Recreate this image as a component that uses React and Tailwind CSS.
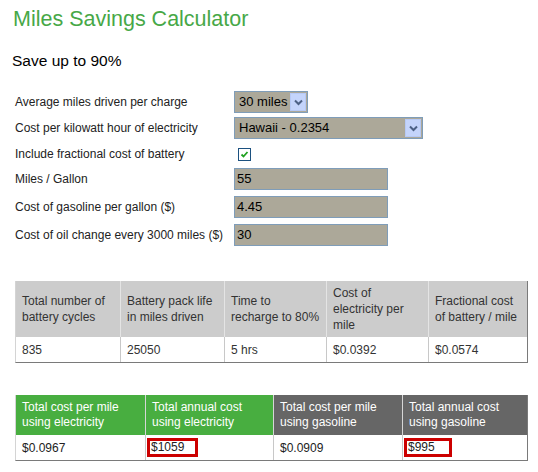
import React from "react";

const font = { fontFamily: '"Liberation Sans", Arial, sans-serif' };

const Arrow = () => (
    <span className="flex h-full w-[16px] items-center justify-center border border-[#b6c9f5] bg-[#c4d4fb]">
        <svg width="9" height="7" viewBox="0 0 9 7">
            <path d="M1 1.5 L4.5 5 L8 1.5" fill="none" stroke="#4d6185" strokeWidth="2" />
        </svg>
    </span>
);

const Select = ({ value, width }) => (
    <div className={`flex h-[22px] ${width} items-stretch border border-[#7f9db9] bg-[#aca899] p-px`}>
        <span className="flex-1 pl-[3px] text-[13px] leading-[18px] text-black">{value}</span>
        <Arrow />
    </div>
);

const TextInput = ({ value }) => (
    <div className="h-[22px] w-[154px] border border-[#7f9db9] bg-[#aca899] pl-[2px] text-[13px] leading-[20px] text-black">
        {value}
    </div>
);

const Checkbox = () => (
    <div className="ml-[4px] flex h-[13px] w-[13px] items-center justify-center border border-[#1c5180] bg-white">
        <svg width="9" height="9" viewBox="0 0 9 9">
            <path d="M1.5 4.5 L3.5 6.5 L7.5 2" fill="none" stroke="#21a121" strokeWidth="1.8" />
        </svg>
    </div>
);

const FormRow = ({ label, className, children }) => (
    <div className={`flex h-[22px] items-center ${className}`}>
        <span className="w-[219px] text-[12px] text-[#222]">{label}</span>
        {children}
    </div>
);

const App = () => {

    // header lines are broken where the original table breaks them
    const batteryHeadings = [
        ["Total number of", "battery cycles"],
        ["Battery pack life", "in miles driven"],
        ["Time to", "recharge to 80%"],
        ["Cost of", "electricity per", "mile"],
        ["Fractional cost", "of battery / mile"],
    ];

    const batteryValues = ["835", "25050", "5 hrs", "$0.0392", "$0.0574"];

    const costHeadings = [
        { text: "Total cost per mile using electricity", bg: "bg-[#48ae40]" },
        { text: "Total annual cost using electricity", bg: "bg-[#48ae40]" },
        { text: "Total cost per mile using gasoline", bg: "bg-[#666666]" },
        { text: "Total annual cost using gasoline", bg: "bg-[#666666]" },
    ];

    return <>
        <div className="h-[472px] w-[538px] bg-white" style={font}>

            {/* Title - Starts Here */}
            <h1 className="pl-[13px] pt-[8px] text-[21.5px] leading-[22px] text-[#47a847]">
                Miles Savings Calculator
            </h1>
            <p className="mt-[23px] pl-[12px] text-[15.5px] leading-[16px] text-black">
                Save up to 90%
            </p>
            {/* Title - Ends Here */}

            {/* Form - Starts Here */}
            <div className="mt-[22px] flex flex-col pl-[15px]">
                <FormRow label="Average miles driven per charge">
                    <Select value="30 miles" width="w-[74px]" />
                </FormRow>
                <FormRow label="Cost per kilowatt hour of electricity" className="mt-[4px]">
                    <Select value="Hawaii - 0.2354" width="w-[189px]" />
                </FormRow>
                <FormRow label="Include fractional cost of battery" className="mt-[4px]">
                    <Checkbox />
                </FormRow>
                <FormRow label="Miles / Gallon" className="mt-[3px]">
                    <TextInput value="55" />
                </FormRow>
                <FormRow label="Cost of gasoline per gallon ($)" className="mt-[6px]">
                    <TextInput value="4.45" />
                </FormRow>
                <FormRow label="Cost of oil change every 3000 miles ($)" className="mt-[6px]">
                    <TextInput value="30" />
                </FormRow>
            </div>
            {/* Form - Ends Here */}

            {/* Battery Table - Starts Here */}
            <div className="ml-[15px] mt-[35px] w-[513px] border-b border-l border-r border-b-[#7a7a7a] border-l-[#d4d4d4] border-r-[#7a7a7a] text-[12px] text-[#333]">
                <div className="grid h-[56px] grid-cols-[104px_104px_102px_102px_100px] bg-[#cccccc]">
                    {batteryHeadings.map((lines, index) => (
                        <div key={`battery-heading-${index}`} className={`flex flex-col justify-center pl-[6px] leading-[16px] ${index > 0 ? "border-l border-[#e4e4e4]" : ""}`}>
                            {lines.map((line, lineIndex) => (
                                <span key={`line-${lineIndex}`} className="whitespace-nowrap">{line}</span>
                            ))}
                        </div>
                    ))}
                </div>
                <div className="grid h-[25px] grid-cols-[104px_104px_102px_102px_100px] bg-white">
                    {batteryValues.map((value, index) => (
                        <div key={`battery-value-${index}`} className={`flex items-center pl-[6px] ${index > 0 ? "border-l border-[#c8c8c8]" : ""}`}>
                            {value}
                        </div>
                    ))}
                </div>
            </div>
            {/* Battery Table - Ends Here */}

            {/* Cost Table - Starts Here */}
            <div className="ml-[15px] mt-[32px] w-[513px] border-b border-l border-r border-b-[#7a7a7a] border-l-[#d4d4d4] border-r-[#7a7a7a] text-[12px]">
                <div className="grid h-[40px] grid-cols-[129px_128px_129px_125px] text-white">
                    {costHeadings.map((heading, index) => (
                        <div key={`cost-heading-${index}`} className={`flex items-center pl-[6px] pr-[8px] leading-[15px] ${heading.bg} ${index > 0 ? "border-l border-[#d6d6d6]" : ""}`}>
                            {heading.text}
                        </div>
                    ))}
                </div>
                <div className="grid h-[25px] grid-cols-[129px_128px_129px_125px] bg-white text-[#222]">
                    <div className="flex items-center pl-[6px]">$0.0967</div>
                    <div className="flex items-center border-l border-[#c8c8c8] pl-[1px]">
                        <span className="h-[19px] w-[51px] border-[3px] border-[#cc0000] pl-px leading-[13px]">$1059</span>
                    </div>
                    <div className="flex items-center border-l border-[#c8c8c8] pl-[6px]">$0.0909</div>
                    <div className="flex items-center border-l border-[#c8c8c8] pl-[1px]">
                        <span className="h-[19px] w-[48px] border-[3px] border-[#cc0000] pl-px leading-[13px]">$995</span>
                    </div>
                </div>
            </div>
            {/* Cost Table - Ends Here */}

        </div>
    </>;
};


export default App;
